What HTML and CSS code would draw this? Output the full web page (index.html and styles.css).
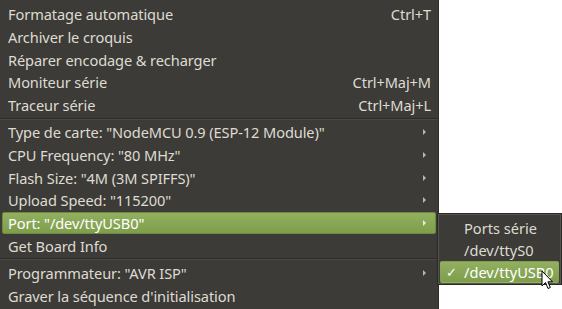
FILE: index.html
```html
<!DOCTYPE html>
<html lang="fr">

<head>
    <meta charset="UTF-8">
    <meta name="viewport" content="width=device-width, initial-scale=1.0">
    <title>Outils</title>
    <link rel="stylesheet" href="styles.css">
</head>

<body>
    <div class="menu">
        <div class="item"><span class="label">Formatage automatique</span><span class="accel">Ctrl+T</span></div>
        <div class="item"><span class="label">Archiver le croquis</span></div>
        <div class="item"><span class="label">Réparer encodage &amp; recharger</span></div>
        <div class="item"><span class="label">Moniteur série</span><span class="accel">Ctrl+Maj+M</span></div>
        <div class="item"><span class="label">Traceur série</span><span class="accel">Ctrl+Maj+L</span></div>
        <div class="sep"></div>
        <div class="item sub"><span class="label">Type de carte: "NodeMCU 0.9 (ESP-12 Module)"</span><span class="arrow"></span></div>
        <div class="item sub"><span class="label">CPU Frequency: "80 MHz"</span><span class="arrow"></span></div>
        <div class="item sub"><span class="label">Flash Size: "4M (3M SPIFFS)"</span><span class="arrow"></span></div>
        <div class="item sub"><span class="label">Upload Speed: "115200"</span><span class="arrow"></span></div>
        <div class="item sub active"><span class="label">Port: "/dev/ttyUSB0"</span><span class="arrow"></span></div>
        <div class="item"><span class="label">Get Board Info</span></div>
        <div class="sep"></div>
        <div class="item sub"><span class="label">Programmateur: "AVR ISP"</span><span class="arrow"></span></div>
        <div class="item"><span class="label">Graver la séquence d'initialisation</span></div>
    </div>

    <!-- sous-menu Port -->
    <div class="submenu">
        <div class="subitem"><span class="check"></span>Ports série</div>
        <div class="subitem"><span class="check"></span>/dev/ttyS0</div>
        <div class="subitem active"><span class="check">✓</span>/dev/ttyUSB0</div>
    </div>

    <svg class="cursor" width="13" height="20" viewBox="0 0 13 20">
        <path d="M1 1 L1 16 L4.5 12.5 L7 18.5 L9.3 17.5 L6.9 11.8 L11.5 11.8 Z" fill="#fff" stroke="#000" stroke-width="1" stroke-linejoin="miter"/>
    </svg>
</body>

</html>
```

FILE: styles.css
```css
* {
    box-sizing: border-box;
}

body {
    margin: 0;
    background: #ffffff;
    font-family: 'Noto Sans', 'Liberation Sans', sans-serif;
    font-size: 14.6px;
    color: #dfdbd2;
    overflow: hidden;
}

.menu {
    width: 439px;
    height: 100vh;
    padding: 3px 2px 0;
    background: #3c3b37;
    border-right: 1px solid #2e2d2a;
    display: flex;
    flex-direction: column;
    overflow: hidden;
}

.item {
    height: 22.7px;
    flex-shrink: 0;
    padding: 0 4px 0 5px;
    display: flex;
    align-items: center;
    justify-content: space-between;
    white-space: nowrap;
    border: 1px solid transparent;
    border-radius: 2px;
}

.item .label {
    letter-spacing: -0.1px;
}

.accel {
    color: #dfdbd2;
    letter-spacing: -0.1px;
}

.arrow {
    width: 0;
    height: 0;
    margin-right: 5px;
    border-top: 3px solid transparent;
    border-bottom: 3px solid transparent;
    border-left: 3px solid #b9b5ac;
}

.sep {
    height: 4.5px;
    flex-shrink: 0;
    margin: 0 -2px;
    display: flex;
    flex-direction: column;
    justify-content: center;
}

.sep::before {
    content: "";
    display: block;
    height: 1px;
    background: #2d2c29;
}

.sep::after {
    content: "";
    display: block;
    height: 1px;
    background: #4a4944;
}

.active {
    background: linear-gradient(#92b060, #7e9e4c);
    border-color: #6b8a3b;
    color: #ffffff;
}

.active .arrow {
    border-left-color: #e6eedb;
}

.submenu {
    position: absolute;
    left: 437px;
    top: 213px;
    width: 125px;
    padding: 3px 2px 1px;
    background: #3c3b37;
    border: 1px solid #2a2926;
    box-shadow: 0 0 0 1px #55544f inset;
}

.subitem {
    height: 22px;
    display: flex;
    align-items: center;
    white-space: nowrap;
    border: 1px solid transparent;
    border-radius: 2px;
}

.check {
    width: 23px;
    flex-shrink: 0;
    padding-left: 5px;
    font-family: 'DejaVu Sans', sans-serif;
    font-size: 13px;
}

.cursor {
    position: absolute;
    left: 541px;
    top: 270px;
}
```
